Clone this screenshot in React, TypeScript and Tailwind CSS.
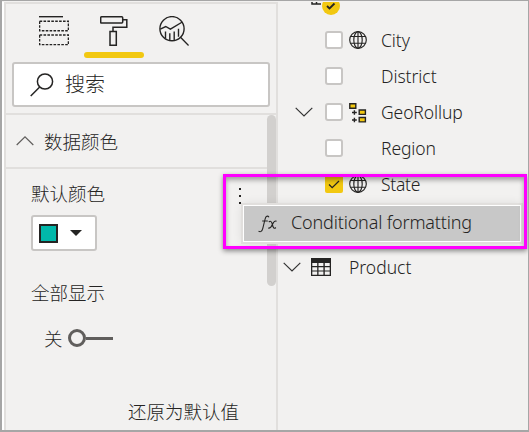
import React from "react";

const Chevron = ({ up = false, stroke = "#333" }: { up?: boolean; stroke?: string }) => (
  <svg width="18" height="10" viewBox="0 0 18 10" fill="none" stroke={stroke} strokeWidth="1.2">
    <path d={up ? "M.7 9 9 .9 17.3 9" : "M.7.9 9 9 17.3.9"} />
  </svg>
);

const Globe = () => (
  <svg width="18" height="18" viewBox="0 0 18 18" fill="none" stroke="#252423" strokeWidth="1.15">
    <circle cx="9" cy="9" r="8.3" />
    <ellipse cx="9" cy="9" rx="4.2" ry="8.3" />
    <path d="M9 .7v16.6M1.6 5.5h14.8M1.6 12.2h14.8" />
  </svg>
);

const Hierarchy = () => (
  <svg width="18" height="20" viewBox="0 0 18 20" fill="#f2c811" stroke="#252423" strokeWidth="1.4">
    <path d="M.8.8h6v4.4h-6zM10.2 7h6.2v4.4h-6.2zM10.2 14.5h6.2v4.4h-6.2z" />
    <path d="M3 9.5h4.8M5.4 7.2v4.6M3 17h4.8M5.4 14.7v4.6" fill="none" />
  </svg>
);

const Fields = () => (
  <svg width="30" height="30" viewBox="0 0 30 30" fill="none" stroke="#252423" strokeWidth="1.4">
    <path d="M0 .7h24" />
    <path d="M.6 5.2h28.8v9.6H.6zM.6 19h28.8v9.6H.6z" strokeDasharray="2.6 1.3" />
  </svg>
);

const Roller = () => (
  <svg width="28" height="30" viewBox="0 0 28 30" fill="none" stroke="#252423" strokeWidth="1.5">
    <rect x=".7" y=".8" width="22" height="6.3" rx="1" />
    <path d="M22.7 3.7h4.1v7.5H13v4" />
    <path d="M10 15.5h6.3v13.7H10z" />
  </svg>
);

const Analytics = () => (
  <svg width="30" height="30" viewBox="0 0 30 30" fill="none" stroke="#252423" strokeWidth="1.4">
    <circle cx="13" cy="12.7" r="12.1" />
    <path d="M21.5 21.3 29.6 29.5M1.3 13.2 6.7 10.5l4.7 2.7L23.3 6M6.5 15.5v7M10.8 17.3v7M15.2 15.6v8.3M19.5 12.8v8" />
  </svg>
);

const Table = () => (
  <svg width="20" height="18" viewBox="0 0 20 18">
    <path d="M0 0h20v18H0z" fill="#252423" />
    <path d="M1.3 5h4.9v3H1.3zM7.5 5h4.9v3H7.5zM13.8 5h4.9v3h-4.9zM1.3 9.2h4.9v3.2H1.3zM7.5 9.2h4.9v3.2H7.5zM13.8 9.2h4.9v3.2h-4.9zM1.3 13.6h4.9v3.2H1.3zM7.5 13.6h4.9v3.2H7.5zM13.8 13.6h4.9v3.2h-4.9z" fill="#f2f1f0" />
  </svg>
);

type Field = { name: string; icon?: "globe" | "hierarchy"; checked?: boolean; open?: boolean; tracking: string };

const fields: Field[] = [
  { name: "City", icon: "globe", tracking: "tracking-[-0.1px]" },
  { name: "District", tracking: "tracking-[-0.05px]" },
  { name: "GeoRollup", icon: "hierarchy", open: true, tracking: "tracking-[-0.1px]" },
  { name: "Region", tracking: "tracking-[-0.1px]" },
  { name: "State", icon: "globe", checked: true, tracking: "tracking-[-0.3px]" },
];

const FieldRow = ({ f }: { f: Field }) => (
  <div className="flex h-9 items-center pl-[17px]">
    <div className="w-[30px]">{f.open && <Chevron />}</div>
    {f.checked ? (
      <div className="flex size-[18px] items-center justify-center rounded-[2px] bg-[#f2c811]">
        <svg width="12" height="9" viewBox="0 0 12 9" fill="none" stroke="#252423" strokeWidth="1.3">
          <path d="M1 4.5 4.2 7.7 11 1" />
        </svg>
      </div>
    ) : (
      <div className="size-[18px] rounded-[3px] border-2 border-[#c8c6c4] bg-white" />
    )}
    <div className="ml-1.5 h-[18px] w-8">
      {f.icon === "globe" && <Globe />}
      {f.icon === "hierarchy" && <Hierarchy />}
    </div>
    <span className={`pt-0.5 leading-none whitespace-nowrap ${f.tracking}`}>{f.name}</span>
  </div>
);

export default function App() {
  return (
    <div className="relative h-[432px] w-[529px] overflow-hidden border-t border-r border-b-2 border-l-2 border-[#a6a6a6] bg-[#f2f1f0] font-['Noto_Sans','Noto_Sans_CJK_SC',sans-serif] text-[17.5px] text-[#252423] [font-weight:350]">
      <div className="flex h-full pt-px">
        <div className="relative flex h-full w-[276px] shrink-0 flex-col border-l-2 border-white">
          <div className="flex h-full flex-col border-x-2 border-t-2 border-[#e1dfdd]">
            <div className="flex h-[54px] pt-3 pl-[33px]">
              <div className="w-[61px]"><Fields /></div>
              <div className="w-[59px]"><Roller /></div>
              <Analytics />
            </div>
            <div className="-mt-1.5 ml-[78px] h-1.5 w-[60px] shrink-0 rounded-full bg-[#f2c811]" />
            <div className="mt-1 ml-1.5 flex h-[45px] w-[258px] shrink-0 items-center rounded-[3px] border-2 border-[#c8c6c4] bg-white pl-4">
              <svg width="24" height="24" viewBox="0 0 24 24" fill="none" stroke="#252423" strokeWidth="1.5">
                <circle cx="15" cy="8.5" r="7.6" />
                <path d="M9.7 14 .7 23" />
              </svg>
              <span className="ml-[11px] pb-0.5 font-['Noto_Sans_CJK_SC',sans-serif] text-[20px] leading-none font-light">搜索</span>
            </div>
            <div className="mt-1.5 flex h-14 shrink-0 items-center border-y-2 border-[#e1dfdd] pl-2.5">
              <Chevron up stroke="#605e5c" />
              <span className="ml-2.5 font-['Noto_Sans_CJK_SC',sans-serif] text-[18.5px] leading-none font-light">数据颜色</span>
            </div>
            <div className="flex flex-col items-start pt-[15px] pl-[25px] font-['Noto_Sans_CJK_SC',sans-serif] text-[18.5px] leading-none font-light">
              <span>默认颜色</span>
              <div className="mt-[12.5px] flex h-9 w-[66px] items-center rounded-[3px] border-2 border-[#c8c6c4] bg-white pl-1.5">
                <div className="size-[19px] border-2 border-[#252423] bg-[#01b8aa]" />
                <svg className="ml-3" width="12" height="6" viewBox="0 0 12 6">
                  <path d="M0 0h12L6 6z" fill="#252423" />
                </svg>
              </div>
              <span className="mt-8">全部显示</span>
              <div className="mt-[27px] flex items-center pl-[13px]">
                <span className="pb-px">关</span>
                <div className="ml-[5.5px] size-[18px] rounded-full border-[3px] border-[#605e5c]" />
                <div className="h-[3px] w-[27px] bg-[#605e5c]" />
              </div>
              <span className="mt-[54px] ml-[97px]">还原为默认值</span>
            </div>
          </div>
          <div className="absolute top-[113px] right-0.5 h-[171px] w-[9px] rounded-full bg-[#d2d0ce]" />
        </div>
        <div className="flex flex-1 flex-col">
          <div className="flex h-5 shrink-0 items-start pl-[33px]">
            <svg width="30" height="14" viewBox="0 0 30 14">
              <path d="M1 0v2h9M5.5 0v2" fill="none" stroke="#252423" strokeWidth="1.5" />
              <circle cx="20" cy="4" r="9" fill="#f2c811" />
              <path d="m16 4 2.5 2.5L23.5 1.5" fill="none" stroke="#252423" strokeWidth="1.8" />
            </svg>
          </div>
          <div className="flex flex-col">
            {fields.map((f) => <FieldRow key={f.name} f={f} />)}
          </div>
          <div className="mt-[47px] flex h-9 items-center pl-[5px]">
            <Chevron />
            <div className="ml-2.5 w-[38px]"><Table /></div>
            <span className="pt-px leading-none">Product</span>
          </div>
        </div>
      </div>

      <div className="absolute top-[187px] left-[237px] flex flex-col gap-[5px]">
        <i className="size-0.5 bg-[#252423]" />
        <i className="size-0.5 bg-[#252423]" />
        <i className="size-0.5 bg-[#252423]" />
      </div>
      <div className="absolute top-[204px] left-[241px] flex h-[37px] w-[278px] items-center border border-white bg-[#c8c8c8] pl-3.5 shadow-[0_0_0_2px_#e1dfdd,0_0_10px_rgba(0,0,0,0.12)]">
        <svg width="20" height="18" viewBox="0 0 20 18" fill="none" stroke="#252423" strokeWidth="1.1">
          <path d="M11 2.2C9.7.3 7.8 1 7.1 4L4.8 13.4C4 16.5 2.4 17.4.5 16.1M4.2 6h5.6" />
          <path d="M10.8 7c2.1-2 3 .3 3.7 3s1.5 4.4 3.3 2.5M18.6 6.2c-2.1-.8-3.3 1.2-4.2 3.2-1 2.3-2 4.2-4.2 3.6" />
        </svg>
        <span className="ml-[13px] pb-[3px] text-[18px] leading-none whitespace-nowrap tracking-[-0.17px]">Conditional formatting</span>
      </div>
      <div className="absolute top-[173px] left-[221px] h-[75px] w-[304px] border-[3px] border-[#ff00ff] shadow-[0_2px_5px_rgba(0,0,0,0.45),inset_0_3px_5px_rgba(0,0,0,0.35)]" />
    </div>
  );
}
